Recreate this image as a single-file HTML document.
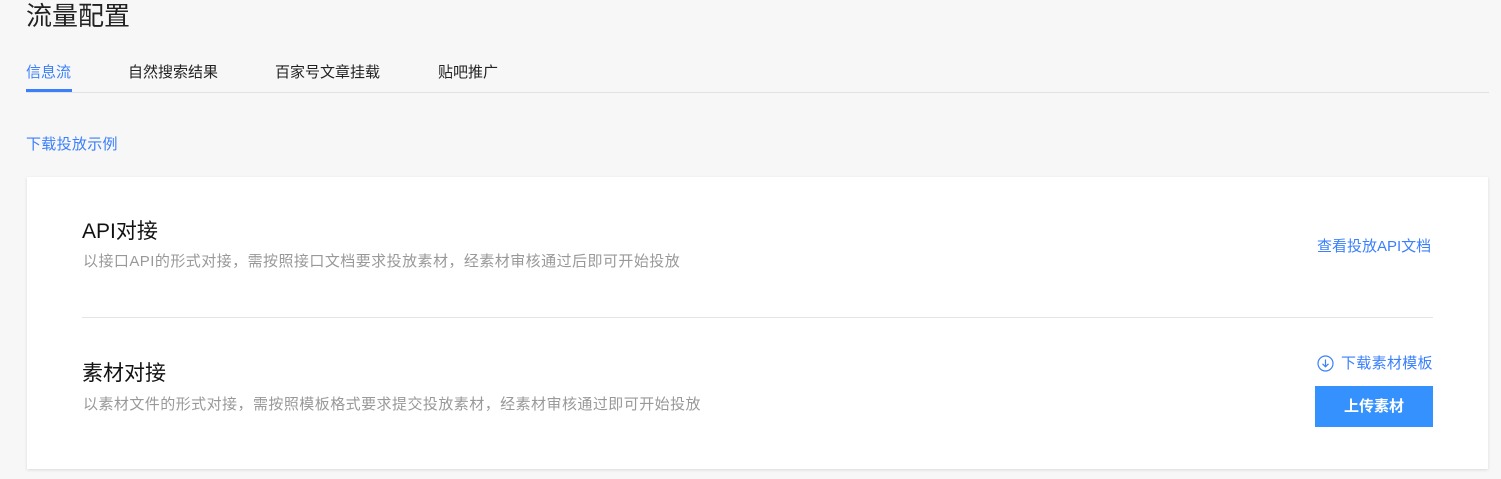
<!DOCTYPE html>
<html><head><meta charset="utf-8"><style>
*{margin:0;padding:0;box-sizing:border-box}
body{width:1501px;height:479px;background:#f7f7f7;font-family:"Liberation Sans","Noto Sans CJK SC",sans-serif;position:relative;overflow:hidden;color:#222}
.a{position:absolute;white-space:nowrap}
.blue{color:#3a7ffc}
</style></head><body>
<div class="a" style="left:26px;top:-1px;font-size:26px;line-height:34px;color:#222">流量配置</div>
<div class="a blue" style="left:26px;top:63px;font-size:15px;line-height:20px">信息流</div>
<div class="a" style="left:128px;top:63px;font-size:15px;line-height:20px">自然搜索结果</div>
<div class="a" style="left:275px;top:63px;font-size:15px;line-height:20px">百家号文章挂载</div>
<div class="a" style="left:438px;top:63px;font-size:15px;line-height:20px">贴吧推广</div>
<div class="a" style="left:26px;top:89px;width:46px;height:3px;background:#3a7ffc"></div>
<div class="a" style="left:26px;top:92px;width:1463px;height:1px;background:#e2e2e2"></div>
<div class="a blue" style="left:26px;top:135px;font-size:15px;line-height:20px;letter-spacing:0.3px">下载投放示例</div>
<div class="a" style="left:27px;top:177px;width:1461px;height:292px;background:#fff;box-shadow:0 1px 3px rgba(0,0,0,.12)"></div>
<div class="a" style="left:82px;top:218px;font-size:21px;line-height:28px;color:#111">API对接</div>
<div class="a" style="left:83px;top:252px;font-size:15px;line-height:20px;color:#999;letter-spacing:0.45px">以接口API的形式对接，需按照接口文档要求投放素材，经素材审核通过后即可开始投放</div>
<div class="a blue" style="left:1317px;top:237px;font-size:15px;line-height:20px">查看投放API文档</div>
<div class="a" style="left:82px;top:317px;width:1351px;height:1px;background:#e4e4e4"></div>
<div class="a" style="left:82px;top:360px;font-size:21px;line-height:28px;color:#111">素材对接</div>
<div class="a" style="left:83px;top:395px;font-size:15px;line-height:20px;color:#999;letter-spacing:0.45px">以素材文件的形式对接，需按照模板格式要求提交投放素材，经素材审核通过即可开始投放</div>
<svg class="a" style="left:1317px;top:355px" width="17" height="17" viewBox="0 0 17 17"><circle cx="8.5" cy="8.5" r="7.5" fill="none" stroke="#3a7ffc" stroke-width="1.2"/><path d="M8.5 4.5v7M5.5 8.8l3 3 3-3" fill="none" stroke="#3a7ffc" stroke-width="1.2"/></svg>
<div class="a blue" style="left:1341px;top:354px;font-size:15px;line-height:20px;letter-spacing:0.3px">下载素材模板</div>
<div class="a" style="left:1315px;top:386px;width:118px;height:41px;background:#3591fd;color:#fff;font-size:15px;font-weight:bold;line-height:41px;text-align:center">上传素材</div>
</body></html>
